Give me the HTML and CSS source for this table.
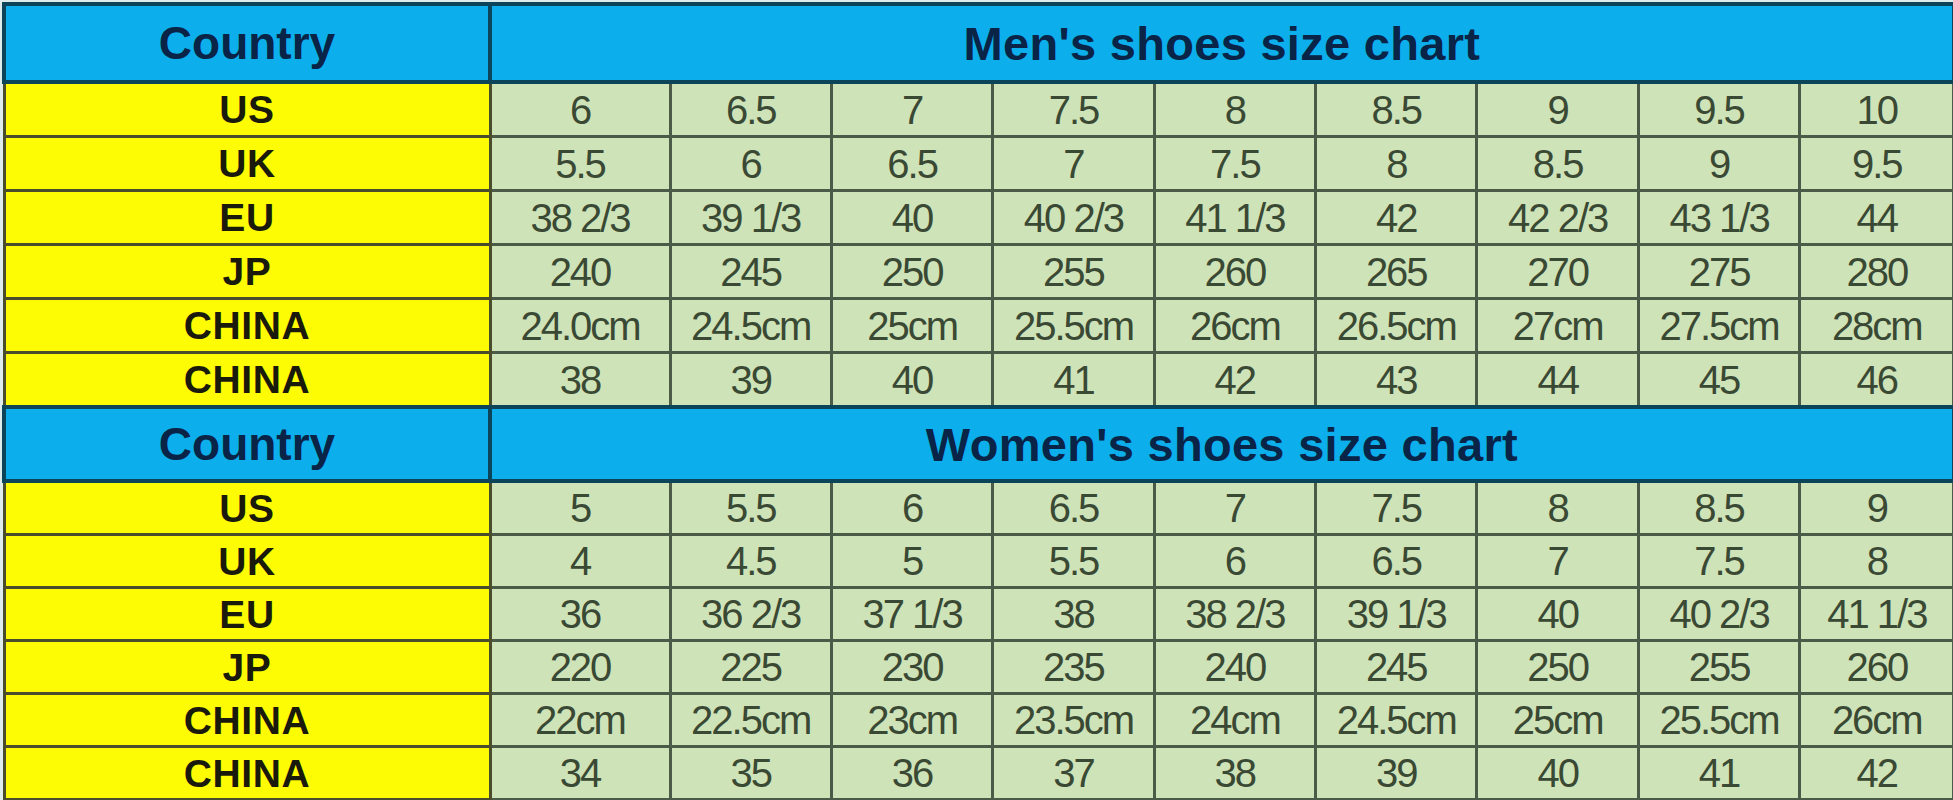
FILE: index.html
```html
<!DOCTYPE html>
<html lang="en">
<head>
<meta charset="utf-8">
<title>Shoes size chart</title>
<link rel="stylesheet" href="styles.css">
</head>
<body>
<table class="chart">
  <colgroup>
    <col class="c-label">
    <col class="c-first">
    <col class="c-n"><col class="c-n"><col class="c-n"><col class="c-n"><col class="c-n"><col class="c-n"><col class="c-n">
    <col class="c-last">
  </colgroup>
  <tbody>
    <tr class="head head-top">
      <th class="country">Country</th>
      <th class="title" colspan="9">Men's shoes size chart</th>
    </tr>
    <tr class="row r1"><th>US</th><td>6</td><td>6.5</td><td>7</td><td>7.5</td><td>8</td><td>8.5</td><td>9</td><td>9.5</td><td>10</td></tr>
    <tr class="row"><th>UK</th><td>5.5</td><td>6</td><td>6.5</td><td>7</td><td>7.5</td><td>8</td><td>8.5</td><td>9</td><td>9.5</td></tr>
    <tr class="row"><th>EU</th><td>38 2/3</td><td>39 1/3</td><td>40</td><td>40 2/3</td><td>41 1/3</td><td>42</td><td>42 2/3</td><td>43 1/3</td><td>44</td></tr>
    <tr class="row"><th>JP</th><td>240</td><td>245</td><td>250</td><td>255</td><td>260</td><td>265</td><td>270</td><td>275</td><td>280</td></tr>
    <tr class="row"><th>CHINA</th><td>24.0cm</td><td>24.5cm</td><td>25cm</td><td>25.5cm</td><td>26cm</td><td>26.5cm</td><td>27cm</td><td>27.5cm</td><td>28cm</td></tr>
    <tr class="row"><th>CHINA</th><td>38</td><td>39</td><td>40</td><td>41</td><td>42</td><td>43</td><td>44</td><td>45</td><td>46</td></tr>
    <tr class="head head-mid">
      <th class="country">Country</th>
      <th class="title" colspan="9">Women's shoes size chart</th>
    </tr>
    <tr class="row row-w"><th>US</th><td>5</td><td>5.5</td><td>6</td><td>6.5</td><td>7</td><td>7.5</td><td>8</td><td>8.5</td><td>9</td></tr>
    <tr class="row row-w"><th>UK</th><td>4</td><td>4.5</td><td>5</td><td>5.5</td><td>6</td><td>6.5</td><td>7</td><td>7.5</td><td>8</td></tr>
    <tr class="row row-w"><th>EU</th><td>36</td><td>36 2/3</td><td>37 1/3</td><td>38</td><td>38 2/3</td><td>39 1/3</td><td>40</td><td>40 2/3</td><td>41 1/3</td></tr>
    <tr class="row row-w"><th>JP</th><td>220</td><td>225</td><td>230</td><td>235</td><td>240</td><td>245</td><td>250</td><td>255</td><td>260</td></tr>
    <tr class="row row-w"><th>CHINA</th><td>22cm</td><td>22.5cm</td><td>23cm</td><td>23.5cm</td><td>24cm</td><td>24.5cm</td><td>25cm</td><td>25.5cm</td><td>26cm</td></tr>
    <tr class="row row-w"><th>CHINA</th><td>34</td><td>35</td><td>36</td><td>37</td><td>38</td><td>39</td><td>40</td><td>41</td><td>42</td></tr>
  </tbody>
</table>
</body>
</html>
```

FILE: styles.css
```css
html, body {
  margin: 0;
  padding: 0;
  background: #dfecec;
  overflow: hidden;
}

body {
  padding: 2px 0 0 2px;
  font-family: "Liberation Sans", Arial, sans-serif;
}

.chart {
  border-collapse: collapse;
  table-layout: fixed;
  width: 1950px;
}

.c-label { width: 486px; }
.c-first { width: 180px; }
.c-n { width: 161.4px; }
.c-last { width: 154px; }

.chart th,
.chart td {
  padding: 0;
  text-align: center;
  vertical-align: middle;
  line-height: 1;
  white-space: nowrap;
  overflow: hidden;
}

.head th {
  background: #0cafec;
  color: #0a2447;
  font-weight: bold;
  border: 4px solid #0c4559;
}

.head-top th { height: 74px; }
.head-mid th { height: 70px; }

.head .country {
  font-size: 46px;
  letter-spacing: 0;
}

.head .title {
  font-size: 47px;
  letter-spacing: 0.3px;
}

.row th {
  background: #fdfc05;
  color: #1a1a0c;
  font-weight: bold;
  font-size: 39px;
  letter-spacing: 0.6px;
  border: 3px solid #4a4d2c;
  height: 51px;
}

.row td {
  background: #cfe3b8;
  color: #3a4934;
  font-size: 40px;
  letter-spacing: -2px;
  border: 3px solid #4c5b47;
  height: 51px;
}

.row-w th,
.row-w td {
  height: 50px;
}
```
